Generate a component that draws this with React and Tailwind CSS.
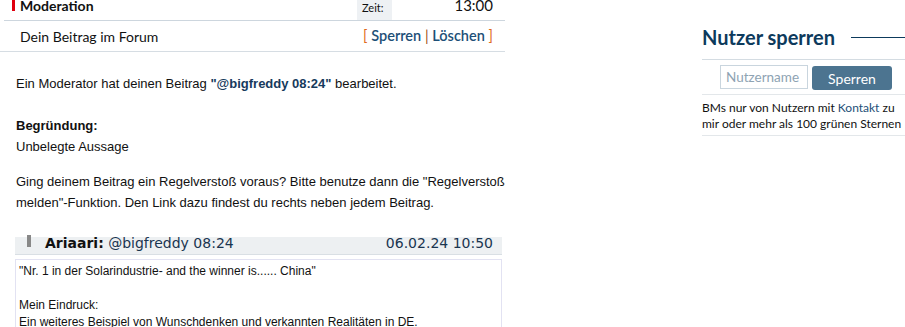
import React from 'react';

const sans = { fontFamily: 'Lato, "Noto Sans", sans-serif' };

export default function App() {
  return (
    <div className="flex w-[905px] h-[327px] overflow-hidden bg-white text-[#111]">
      <div className="w-[505px] shrink-0">
        <div className="flex items-stretch h-[21px] ml-[4px] border-b border-[#cdd6de]" style={sans}>
          <div className="flex items-start flex-1 pl-[8px]">
            <span className="w-[3px] h-[11px] bg-[#e0000f] mr-[5px]"></span>
            <span className="font-bold text-[14px] leading-[13px] -mt-[1px]">Moderation</span>
          </div>
          <div className="w-[35px] bg-[#eef1f4] text-[11px] pl-[5px] pt-[1px] leading-[13px]">Zeit:</div>
          <div className="w-[113px] text-right pr-[12px] text-[15px] leading-[15px] -mt-[2px]">13:00</div>
        </div>
        <div className="flex items-center justify-between h-[31px] border-b border-[#d6dde3] pl-[20px] pr-[12px] text-[14px]" style={sans}>
          <span>Dein Beitrag im Forum</span>
          <span className="text-[#e06a1b] text-[14.5px]">
            [ <span className="text-[#1d4f77] font-semibold">Sperren</span> <span className="text-[#a04a10]">|</span>{' '}
            <span className="text-[#1d4f77] font-semibold">Löschen</span> ]
          </span>
        </div>
        <div className="pl-[16px] pt-[21px] text-[13px] leading-[21px] font-['Liberation_Sans',Arial,sans-serif] text-[#111]">
          <p>
            Ein Moderator hat deinen Beitrag <b className="text-[#163a5c]">"@bigfreddy 08:24"</b> bearbeitet.
          </p>
          <p className="mt-[21px] font-bold">Begründung:</p>
          <p>Unbelegte Aussage</p>
          <p className="mt-[14px]">
            Ging deinem Beitrag ein Regelverstoß voraus? Bitte benutze dann die "Regelverstoß melden"-Funktion. Den Link dazu findest du rechts neben jedem Beitrag.
          </p>
        </div>
        <div className="ml-[15px] w-[487px] mt-[24px]">
          <div className="relative flex items-center justify-between h-[18px] bg-[#edf0f2] border-b border-[#d9dfe4] font-['DejaVu_Sans',Verdana,sans-serif] text-[14px] text-[#1a3550]">
            <span className="absolute left-[12px] -top-[2px] w-[4px] h-[12px] bg-[#888]"></span>
            <span className="pl-[30px] -mt-[4px]">
              <b className="text-[#111]">Ariaari:</b> @bigfreddy 08:24
            </span>
            <span className="pr-[9px] -mt-[4px]">06.02.24 10:50</span>
          </div>
          <div className="mt-[4px] border border-[#e2e2f2] px-[3px] pt-[3px] text-[12px] leading-[17px] font-['Liberation_Sans',Arial,sans-serif] text-[#111] h-[80px]">
            <p>"Nr. 1 in der Solarindustrie- and the winner is...... China"</p>
            <p className="mt-[17px]">Mein Eindruck:</p>
            <p>Ein weiteres Beispiel von Wunschdenken und verkannten Realitäten in DE.</p>
          </div>
        </div>
      </div>
      <div className="ml-[197px] w-[203px] shrink-0 pt-[26px]" style={sans}>
        <div className="flex items-center h-[22px]">
          <h2 className="font-bold text-[20px] text-[#0d3a5c] leading-[22px]">Nutzer sperren</h2>
          <span className="ml-[16px] flex-1 h-px bg-[#0d3a5c]"></span>
        </div>
        <div className="mt-[11px] border-t border-[#d4dce2] flex items-center pl-[18px] pt-[4px] pb-[4px] gap-[4px]">
          <input
            className="w-[88px] h-[24px] border border-[#c9d5de] px-[5px] text-[13.5px] text-[#666] placeholder:text-[#8ea3b3] outline-none"
            placeholder="Nutzername"
            style={sans}
          />
          <button className="w-[80px] h-[24px] mt-[2px] rounded-[3px] bg-[#4c7490] text-white text-[14px]">Sperren</button>
        </div>
        <div className="w-[210px] border-t border-[#e3e7ea] border-b pt-[5px] pb-[3px] text-[12px] leading-[16px] text-[#111]">
          BMs nur von Nutzern mit <span className="text-[#1d4f77]">Kontakt</span> zu<br />
          mir oder mehr als 100 grünen Sternen
        </div>
      </div>
    </div>
  );
}
